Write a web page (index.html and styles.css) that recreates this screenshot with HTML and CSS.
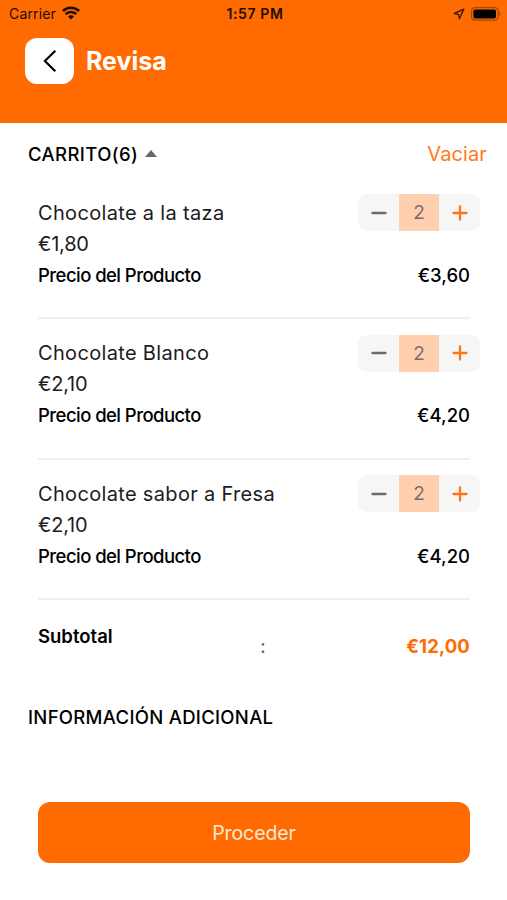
FILE: index.html
```
<!DOCTYPE html>
<html lang="es">
<head>
  <meta charset="UTF-8">
  <title>Revisa</title>
  <meta name="viewport" content="width=device-width, initial-scale=1">
  <link rel="stylesheet" href="styles.css">
</head>
<body>
  <header class="header">
    <div class="status-bar">
      <div class="carrier">
        <span>Carrier</span>
        <svg class="wifi" viewBox="0 0 18 14" width="18" height="14">
          <path d="M.9 5.100a11.500 11.500 0 0 1 16.200 0M3.700 8.200a7.500 7.500 0 0 1 10.600 0" fill="none" stroke="#1c0c00" stroke-width="2.600"/>
          <path d="M9 13.600 6 10.600a4.200 4.200 0 0 1 6 0z" fill="#1c0c00"/>
        </svg>
      </div>
      <span class="time">1:57 PM</span>
      <div class="indicators">
        <svg viewBox="0 0 12 12" width="12" height="12">
          <path d="M10.7 1.3 1.2 5.5l4.3.9.9 4.3z" fill="none" stroke="#4a1f00" stroke-width="1.5" stroke-linejoin="round"/>
        </svg>
        <svg viewBox="0 0 30 14" width="30" height="14">
          <rect x=".6" y=".6" width="26.4" height="12.6" rx="3.4" fill="none" stroke="#a84700" stroke-width="1.2"/>
          <rect x="2.4" y="2.4" width="22.6" height="9" rx="1.8" fill="#000"/>
          <path d="M28.2 4.8v4.4c1.8-.7 1.8-3.7 0-4.4z" fill="#a84700"/>
        </svg>
      </div>
    </div>
    <div class="title-bar">
      <button class="back" aria-label="Volver">
        <svg viewBox="0 0 14 24" width="14" height="24">
          <path d="M12.3 1.8 1.900 12l10.400 10.200" fill="none" stroke="#000" stroke-width="2.200"/>
        </svg>
      </button>
      <h1>Revisa</h1>
    </div>
  </header>

  <main>
    <div class="cart-head">
      <h2 class="cart-title">CARRITO(6)</h2>
      <span class="arrow-up"></span>
      <a class="clear">Vaciar</a>
    </div>

    <div class="cart">
      <div class="item">
        <div class="row">
          <span class="name">Chocolate a la taza</span>
          <div class="stepper">
            <button class="minus" aria-label="Menos"><svg viewBox="0 0 16 16" width="16" height="16"><path d="M1.500 8h13"/></svg></button>
            <span class="qty">2</span>
            <button class="plus" aria-label="Más"><svg viewBox="0 0 16 16" width="16" height="16"><path d="M1.500 8h13M8 1.500v13"/></svg></button>
          </div>
        </div>
        <div class="row price">€1,80</div>
        <div class="row total"><span class="caption">Precio del Producto</span><span class="amount">€3,60</span></div>
      </div>

      <div class="item">
        <div class="row">
          <span class="name">Chocolate Blanco</span>
          <div class="stepper">
            <button class="minus" aria-label="Menos"><svg viewBox="0 0 16 16" width="16" height="16"><path d="M1.500 8h13"/></svg></button>
            <span class="qty">2</span>
            <button class="plus" aria-label="Más"><svg viewBox="0 0 16 16" width="16" height="16"><path d="M1.500 8h13M8 1.500v13"/></svg></button>
          </div>
        </div>
        <div class="row price">€2,10</div>
        <div class="row total"><span class="caption">Precio del Producto</span><span class="amount">€4,20</span></div>
      </div>

      <div class="item">
        <div class="row">
          <span class="name">Chocolate sabor a Fresa</span>
          <div class="stepper">
            <button class="minus" aria-label="Menos"><svg viewBox="0 0 16 16" width="16" height="16"><path d="M1.500 8h13"/></svg></button>
            <span class="qty">2</span>
            <button class="plus" aria-label="Más"><svg viewBox="0 0 16 16" width="16" height="16"><path d="M1.500 8h13M8 1.500v13"/></svg></button>
          </div>
        </div>
        <div class="row price">€2,10</div>
        <div class="row total"><span class="caption">Precio del Producto</span><span class="amount">€4,20</span></div>
      </div>
    </div>

    <div class="subtotal">
      <span class="label">Subtotal</span>
      <span class="colon">:</span>
      <span class="sum">€12,00</span>
    </div>

    <h2 class="info-title">INFORMACIÓN ADICIONAL</h2>
  </main>

  <footer>
    <button class="proceed">Proceder</button>
  </footer>
</body>
</html>
```
FILE: styles.css
```
* {
  box-sizing: border-box;
}
html, body {
  margin: 0;
  padding: 0;
  height: 100%;
  background-color: #fff;
  font-family: Inter, 'Liberation Sans', sans-serif;
  color: #000;
}
body {
  display: flex;
  flex-direction: column;
}
button {
  border: none;
  padding: 0;
  font-family: inherit;
  cursor: pointer;
}
h1, h2 {
  margin: 0;
}
.header {
  height: 123px;
  flex-shrink: 0;
  background-color: #ff6b00;
}
.status-bar {
  height: 27px;
  padding: 0 6px 0 9px;
  display: grid;
  grid-template-columns: 1fr auto 1fr;
  align-items: center;
  font-size: 14px;
  color: #1c0c00;
}
.carrier {
  display: flex;
  align-items: center;
  gap: 6px;
  letter-spacing: 0.15px;
}
.wifi {
  display: block;
  margin-top: -2px;
}
.time {
  font-weight: 600;
  letter-spacing: 0.6px;
}
.indicators {
  display: flex;
  align-items: center;
  justify-content: flex-end;
  gap: 6px;
}
.title-bar {
  display: flex;
  align-items: center;
  gap: 12px;
  padding: 11px 25px 0;
}
.back {
  width: 49px;
  height: 46px;
  border-radius: 12px;
  background-color: #fff;
  display: flex;
  align-items: center;
  justify-content: center;
}
h1 {
  font-size: 25px;
  font-weight: 700;
  color: #fff;
}
main {
  flex: 1;
}
.cart-head {
  display: flex;
  align-items: center;
  height: 31px;
  margin: 15px 20px 28px 28px;
}
.cart-title, .info-title {
  font-size: 18.5px;
  font-weight: 500;
  letter-spacing: 0.3px;
}
.cart-title {
  letter-spacing: 0.4px;
}
.arrow-up {
  margin-left: 7px;
  border: 6px solid transparent;
  border-top: 0;
  border-bottom: 7px solid #66666e;
}
.clear {
  margin-left: auto;
  font-size: 20px;
  letter-spacing: 0.1px;
  color: #ff7a1c;
}
.cart, .subtotal {
  margin: 0 37px 0 38px;
}
.item {
  height: 122px;
  margin-bottom: 18.5px;
  border-bottom: 2px solid #f0f0f0;
}
.row {
  display: flex;
  justify-content: space-between;
  align-items: center;
  height: 31px;
}
.name, .price {
  font-size: 20px;
  color: #1c1c1e;
}
.name {
  letter-spacing: 0.33px;
}
.price {
  letter-spacing: -0.2px;
}
.total {
  font-size: 18.5px;
  font-weight: 500;
}
.caption {
  letter-spacing: -0.55px;
}
.stepper {
  display: flex;
  width: 122px;
  height: 37px;
  margin-right: -10px;
  border-radius: 9px;
  background-color: #f6f6f6;
  overflow: hidden;
}
.minus, .plus {
  display: flex;
  align-items: center;
  justify-content: center;
  width: 41px;
  background: none;
}
.stepper svg {
  fill: none;
  stroke: #6b6878;
  stroke-width: 2.3;
  stroke-linecap: round;
}
.stepper .plus svg {
  stroke: #ff7414;
}
.qty {
  width: 40px;
  line-height: 38px;
  text-align: center;
  font-size: 19px;
  color: #7d6a6c;
  background-color: #ffd0b0;
}
.subtotal {
  display: grid;
  grid-template-columns: 1fr auto 1fr;
  height: 50px;
  padding: 6px 0 0;
  font-size: 18.5px;
}
.label {
  font-weight: 600;
}
.colon {
  margin: 10px 0 0 18px;
  color: #55555d;
}
.sum {
  margin-top: 10px;
  text-align: right;
  font-weight: 700;
  letter-spacing: 0.15px;
  color: #ff6b00;
}
.info-title {
  margin: 36px 28px 0;
  line-height: 24px;
}
footer {
  padding: 0 37px 37px 38px;
}
.proceed {
  display: block;
  width: 100%;
  height: 61px;
  border-radius: 12px;
  background-color: #ff6b00;
  color: #ffe9d6;
  font-size: 19.5px;
  letter-spacing: -0.1px;
}
```
